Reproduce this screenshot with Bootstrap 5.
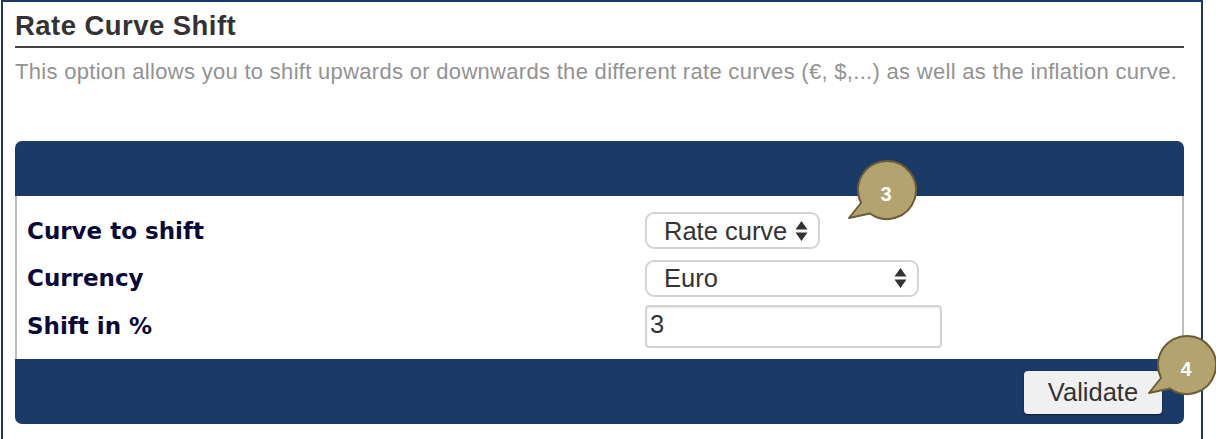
<!DOCTYPE html>
<html lang="en">
<head>
<meta charset="utf-8">
<title>Rate Curve Shift</title>
<link href="https://cdn.jsdelivr.net/npm/bootstrap@5.3.0/dist/css/bootstrap.min.css" rel="stylesheet">
<style>
html,body{height:439px;overflow:hidden;background:#fff}
body{font-family:"Liberation Sans",Arial,sans-serif}
.frame{margin:0 13px 0 1px;height:439px;border:2px solid #1b3a67;border-bottom:0;padding:0 17px 0 12px;position:relative}
.rc-title{font-size:27.500px;font-weight:700;line-height:30px;letter-spacing:.45px;color:#333;margin:9px 0 0;padding-bottom:5px;border-bottom:2px solid #444}
.rc-intro{font-size:22px;line-height:26px;color:#939393;text-align:justify;letter-spacing:.3px;margin:11px 0 0;height:82px;padding-right:3px}
.rc-head{height:55px;background:#1b3a67;border-radius:7px 7px 0 0}
.rc-body{height:163px;border-left:2px solid #bdbdbd;border-right:2px solid #bdbdbd;padding:11px 10px 0;background:#fff}
.rc-row{height:47.5px}
.rc-label{width:618px;font-family:"DejaVu Sans",Verdana,sans-serif;font-weight:700;font-size:23px;color:#08083a;flex:none}
.rc-select.form-select{font-family:"Liberation Sans",Arial,sans-serif;font-size:25.500px;line-height:30px;color:#333;height:37px;padding:0 30px 0 17px;border:2px solid #d4d4d4;border-radius:9px;box-shadow:none;background-color:#fff;background-position:right 10px center;background-size:13px 22px;background-image:url("data:image/svg+xml,%3Csvg xmlns='http://www.w3.org/2000/svg' viewBox='0 0 13 22'%3E%3Cpath fill='%23333' d='M6.5 1 12.5 9.500H.5zM.5 12.500h12L6.500 21z'/%3E%3C/svg%3E")}
.sel-a.form-select{width:175px}
.sel-b.form-select{width:274px}
.rc-input.form-control{font-family:"Liberation Sans",Arial,sans-serif;width:297px;height:43px;font-size:25.500px;color:#333;padding:0 3px 3px;border:2px solid #d4d4d4;border-radius:4px;box-shadow:inset 0 1px 2px rgba(0,0,0,.1);margin-top:1px}
.rc-foot{height:65px;background:#1b3a67;border-radius:0 0 7px 7px;padding:12px 22px 0 0}
.rc-btn.btn{width:138px;height:43px;padding:0;font-size:25.500px;line-height:43px;color:#333;background:#f0f0f0;border:0;border-radius:4px;box-shadow:0 1px 2px rgba(0,0,0,.5)}
.bubble{position:absolute;width:72px;height:62px}
.bubble svg{display:block;position:absolute;left:0;top:0}
.bubble span{position:absolute;right:0;top:4px;width:62px;height:60px;line-height:60px;text-align:center;color:#fff;font-weight:700;font-size:20px}
.b3{left:845px;top:160px}
.b4{left:1145px;top:335px}
</style>
</head>
<body>
<div class="frame">
  <h1 class="rc-title">Rate Curve Shift</h1>
  <p class="rc-intro">This option allows you to shift upwards or downwards the different rate curves (€, $,...) as well as the inflation curve.</p>
  <div class="rc-head"></div>
  <div class="rc-body">
    <div class="rc-row d-flex align-items-center">
      <div class="rc-label">Curve to shift</div>
      <select class="form-select rc-select sel-a"><option>Rate curve</option></select>
    </div>
    <div class="rc-row d-flex align-items-center">
      <div class="rc-label">Currency</div>
      <select class="form-select rc-select sel-b"><option>Euro</option></select>
    </div>
    <div class="rc-row d-flex align-items-center">
      <div class="rc-label">Shift in %</div>
      <input class="form-control rc-input" type="text" value="3">
    </div>
  </div>
  <div class="rc-foot d-flex justify-content-end align-items-start">
    <button class="btn rc-btn" type="button">Validate</button>
  </div>
</div>
<div class="bubble b3">
  <svg width="72" height="62" viewBox="0 0 72 62"><path fill="#b3a370" stroke="#6b5c34" stroke-width="2" stroke-linejoin="round" d="M42 1a29 29 0 1 1-17 52.500L4 58 16 43A29 29 0 0 1 42 1z"/></svg>
  <span>3</span>
</div>
<div class="bubble b4">
  <svg width="72" height="62" viewBox="0 0 72 62"><path fill="#b3a370" stroke="#6b5c34" stroke-width="2" stroke-linejoin="round" d="M42 1a29 29 0 1 1-17 52.500L4 58 16 43A29 29 0 0 1 42 1z"/></svg>
  <span>4</span>
</div>
</body>
</html>
